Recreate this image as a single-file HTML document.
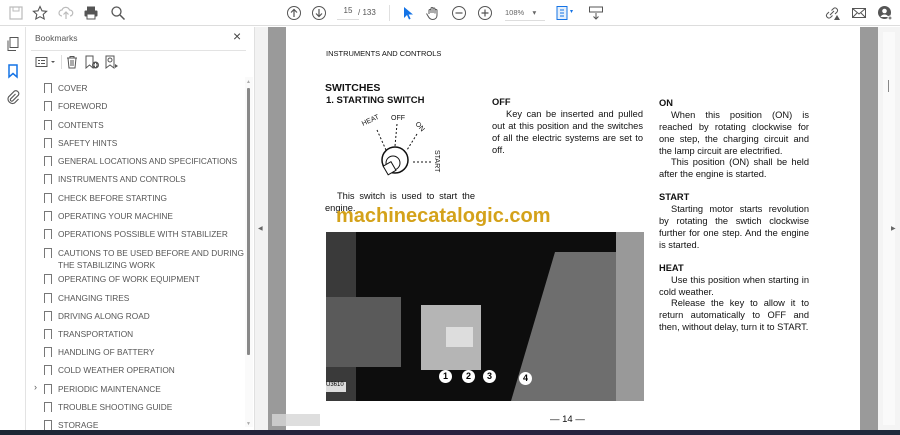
<!DOCTYPE html>
<html><head><style>
*{margin:0;padding:0;box-sizing:border-box}
body{width:900px;height:435px;overflow:hidden;background:#fff;font-family:"Liberation Sans",sans-serif;position:relative}
.a{position:absolute}
.tb{left:0;top:0;width:900px;height:26px;background:#fff;border-bottom:1px solid #ddd}
.ic{position:absolute;top:5px}
.rail{left:0;top:27px;width:26px;height:403px;background:#fff;border-right:1px solid #e3e3e3}
.panel{left:26px;top:27px;width:228px;height:403px;background:#fff}
.bm{position:absolute;left:44px;font-size:8.3px;color:#555;line-height:12px;white-space:nowrap}
.bm:before{content:"";position:absolute;left:0;top:1px;width:6px;height:9px;border:1px solid #777;border-bottom:none}
.bm span{position:absolute;left:14px;top:0}
.pg{font-family:"Liberation Sans",sans-serif;color:#111;position:absolute;font-size:9.3px;line-height:12px}
.j{text-align:justify}
</style></head><body>
<div class="a tb">
 <svg class="ic" style="left:8px" width="16" height="16" viewBox="0 0 16 16"><rect x="2" y="2" width="12" height="12" fill="none" stroke="#bbb" stroke-width="1.2"/><rect x="5" y="2" width="6" height="4" fill="none" stroke="#bbb"/></svg>
 <svg class="ic" style="left:32px" width="16" height="16" viewBox="0 0 16 16"><path d="M8 1.5l2 4.3 4.6.5-3.4 3.1 1 4.6L8 11.7 3.8 14l1-4.6L1.4 6.3l4.6-.5z" fill="none" stroke="#555" stroke-width="1.1"/></svg>
 <svg class="ic" style="left:58px" width="16" height="16" viewBox="0 0 16 16"><path d="M4 11a3 3 0 010-6 4 4 0 017.5 0A3 3 0 0112 11M8 14V7M5.5 9.5L8 7l2.5 2.5" fill="none" stroke="#bbb" stroke-width="1.2"/></svg>
 <svg class="ic" style="left:83px" width="16" height="16" viewBox="0 0 16 16"><rect x="4" y="1.5" width="8" height="4" fill="#555"/><rect x="1.5" y="5.5" width="13" height="6" rx="1" fill="#555"/><rect x="4" y="9" width="8" height="5" fill="#fff" stroke="#555"/></svg>
 <svg class="ic" style="left:110px" width="16" height="16" viewBox="0 0 16 16"><circle cx="6.5" cy="6.5" r="4.5" fill="none" stroke="#555" stroke-width="1.3"/><path d="M10 10l4.5 4.5" stroke="#555" stroke-width="1.5"/></svg>
 <svg class="ic" style="left:286px" width="16" height="16" viewBox="0 0 16 16"><circle cx="8" cy="8" r="6.5" fill="none" stroke="#555"/><path d="M8 12V4.5M5 7.5L8 4.5l3 3" fill="none" stroke="#555" stroke-width="1.2"/></svg>
 <svg class="ic" style="left:311px" width="16" height="16" viewBox="0 0 16 16"><circle cx="8" cy="8" r="6.5" fill="none" stroke="#555"/><path d="M8 4v7.5M5 8.5l3 3 3-3" fill="none" stroke="#555" stroke-width="1.2"/></svg>
 <div class="a" style="left:337px;top:6px;width:22px;height:14px;border-bottom:1px solid #ddd;font-size:8px;color:#555;text-align:center">15</div>
 <div class="a" style="left:358px;top:8px;font-size:8px;color:#555">/ 133</div>
 <div class="a" style="left:389px;top:5px;width:1px;height:16px;background:#e0e0e0"></div>
 <svg class="ic" style="left:400px" width="16" height="16" viewBox="0 0 16 16"><path d="M4 2v11l3-3 2 4.5 1.6-.7-2-4.3H13z" fill="#1473e6"/></svg>
 <svg class="ic" style="left:425px" width="16" height="16" viewBox="0 0 16 16"><path d="M4 9V5.5a1 1 0 012 0V8 3.5a1 1 0 012 0V8 4a1 1 0 012 0v4.5-3a1 1 0 012 0V10c0 3-2 4.5-4.5 4.5S4 13 3 11l-1.5-2.5" fill="none" stroke="#555" stroke-width="1"/></svg>
 <svg class="ic" style="left:451px" width="16" height="16" viewBox="0 0 16 16"><circle cx="8" cy="8" r="6.5" fill="none" stroke="#555"/><path d="M4.5 8h7" stroke="#555" stroke-width="1.2"/></svg>
 <svg class="ic" style="left:477px" width="16" height="16" viewBox="0 0 16 16"><circle cx="8" cy="8" r="6.5" fill="none" stroke="#555"/><path d="M4.5 8h7M8 4.5v7" stroke="#555" stroke-width="1.2"/></svg>
 <div class="a" style="left:505px;top:8px;width:40px;font-size:7.5px;color:#666;border-bottom:1px solid #ddd;height:13px">108%&nbsp;&nbsp;&nbsp;&nbsp;▾</div>
 <svg class="ic" style="left:555px" width="16" height="16" viewBox="0 0 16 16"><rect x="2" y="1.5" width="10" height="13" fill="#e6f0fb" stroke="#1473e6"/><path d="M5 5h4M5 8h4M5 11h4" stroke="#1473e6"/></svg>
 <div class="a" style="left:570px;top:8px;font-size:6px;color:#1473e6">▾</div>
 <svg class="ic" style="left:588px" width="16" height="16" viewBox="0 0 16 16"><rect x="1.5" y="2" width="13" height="5" fill="none" stroke="#555"/><path d="M8 8v6M5.5 11.5L8 14l2.5-2.5" fill="none" stroke="#555"/></svg>
 <svg class="ic" style="left:824px" width="16" height="16" viewBox="0 0 16 16"><path d="M6 10L10 6M5 7l-2 2a2.5 2.5 0 003.5 3.5l2-2M11 9l2-2a2.5 2.5 0 00-3.5-3.5l-2 2" fill="none" stroke="#555"/><path d="M10 15l3-5 3 5z" fill="#555"/></svg>
 <svg class="ic" style="left:851px" width="16" height="16" viewBox="0 0 16 16"><rect x="1.5" y="3.5" width="13" height="9" fill="none" stroke="#555"/><path d="M1.5 3.5L8 9l6.5-5.5M1.5 12.5L6 8M14.5 12.5L10 8" fill="none" stroke="#555"/></svg>
 <svg class="ic" style="left:877px" width="16" height="16" viewBox="0 0 16 16"><circle cx="7.5" cy="7.5" r="6.5" fill="#555"/><circle cx="7.5" cy="6" r="2.3" fill="#fff"/><path d="M3.5 12a4.5 4.5 0 018 0" fill="#fff"/><circle cx="13" cy="13" r="2.5" fill="#fff"/><path d="M13 11.5v3M11.5 13h3" stroke="#555"/></svg>
</div>
<div class="a rail">
 <svg class="a" style="left:5px;top:9px" width="16" height="16" viewBox="0 0 16 16"><rect x="5" y="1.5" width="8" height="10" fill="none" stroke="#555"/><path d="M3 4.5v10h8" fill="none" stroke="#555"/></svg>
 <svg class="a" style="left:5px;top:36px" width="16" height="16" viewBox="0 0 16 16"><path d="M4 2h8v12l-4-3.5L4 14z" fill="none" stroke="#1473e6" stroke-width="1.5"/></svg>
 <svg class="a" style="left:5px;top:62px" width="16" height="16" viewBox="0 0 16 16"><path d="M10.5 5l-5 5a1.5 1.5 0 002 2l6-6a3 3 0 00-4-4l-6 6a4.5 4.5 0 006 6l4-4" fill="none" stroke="#555" stroke-width="1.1"/></svg>
</div>
<div class="a panel">
 <div class="a" style="left:9px;top:6px;font-size:8.5px;color:#555">Bookmarks</div>
 <div class="a" style="left:207px;top:1px;font-size:14px;color:#444">×</div>
 <div class="a" style="left:5px;top:23px;width:215px;height:1px;background:#e3e3e3"></div>
 <svg class="a" style="left:9px;top:29px" width="22" height="12" viewBox="0 0 22 12"><rect x="1" y="1.5" width="11" height="9" fill="none" stroke="#555"/><path d="M3 4.5h2M6 4.5h4M3 7.5h2M6 7.5h4" stroke="#555"/><path d="M16 5l2 2 2-2z" fill="#555"/></svg>
 <div class="a" style="left:35px;top:28px;width:1px;height:14px;background:#ddd"></div>
 <svg class="a" style="left:39px;top:28px" width="14" height="14" viewBox="0 0 14 14"><path d="M2 3h10M5 3V1.5h4V3M3 3l1 10h6l1-10M6 5v6M8 5v6" fill="none" stroke="#555"/></svg>
 <svg class="a" style="left:58px;top:28px" width="16" height="14" viewBox="0 0 16 14"><path d="M2 1h7v12l-3.5-3L2 13z" fill="none" stroke="#555"/><circle cx="11.5" cy="10" r="3.5" fill="#555"/><path d="M11.5 8v4M9.5 10h4" stroke="#fff"/></svg>
 <svg class="a" style="left:78px;top:28px" width="16" height="14" viewBox="0 0 16 14"><path d="M2 1h8v12l-4-3-4 3z" fill="none" stroke="#555"/><circle cx="6" cy="5" r="2" fill="none" stroke="#555"/><path d="M11 9l3 2-3 2z" fill="#555"/></svg>
 <div class="a" style="left:219px;top:50px;width:8px;height:350px;background:#fafafa"></div>
 <div class="a" style="left:221px;top:61px;width:3px;height:267px;background:#888;border-radius:1px"></div>
 <div class="a" style="left:220px;top:52px;font-size:5px;color:#aaa">▲</div>
 <div class="a" style="left:220px;top:394px;font-size:5px;color:#aaa">▼</div>
</div>
<div class="bm" style="top:82px"><span>COVER</span></div>
<div class="bm" style="top:100px"><span>FOREWORD</span></div>
<div class="bm" style="top:119px"><span>CONTENTS</span></div>
<div class="bm" style="top:137px"><span>SAFETY HINTS</span></div>
<div class="bm" style="top:155px"><span>GENERAL LOCATIONS AND SPECIFICATIONS</span></div>
<div class="bm" style="top:173px"><span>INSTRUMENTS AND CONTROLS</span></div>
<div class="bm" style="top:192px"><span>CHECK BEFORE STARTING</span></div>
<div class="bm" style="top:210px"><span>OPERATING YOUR MACHINE</span></div>
<div class="bm" style="top:228px"><span>OPERATIONS POSSIBLE WITH STABILIZER</span></div>
<div class="bm" style="top:247px"><span>CAUTIONS TO BE USED BEFORE AND DURING<br>THE STABILIZING WORK</span></div>
<div class="bm" style="top:273px"><span>OPERATING OF WORK EQUIPMENT</span></div>
<div class="bm" style="top:292px"><span>CHANGING TIRES</span></div>
<div class="bm" style="top:310px"><span>DRIVING ALONG ROAD</span></div>
<div class="bm" style="top:328px"><span>TRANSPORTATION</span></div>
<div class="bm" style="top:346px"><span>HANDLING OF BATTERY</span></div>
<div class="bm" style="top:364px"><span>COLD WEATHER OPERATION</span></div>
<div class="bm" style="top:383px"><span>PERIODIC MAINTENANCE</span></div>
<div class="a" style="left:34px;top:382px;font-size:9px;color:#555">›</div>
<div class="bm" style="top:401px"><span>TROUBLE SHOOTING GUIDE</span></div>
<div class="bm" style="top:419px"><span>STORAGE</span></div>
<div class="a" style="left:254px;top:27px;width:14px;height:403px;background:#f2f2f2;border-left:1px solid #e0e0e0"></div>
<div class="a" style="left:258px;top:225px;font-size:6px;color:#666">◀</div>
<div class="a" style="left:268px;top:27px;width:18px;height:403px;background:#9a9a9a"></div>
<div class="a" style="left:860px;top:27px;width:18px;height:403px;background:#9a9a9a"></div>
<div class="a" style="left:878px;top:27px;width:22px;height:403px;background:#f4f4f4"></div>
<div class="a" style="left:883px;top:32px;width:12px;height:393px;background:#fafafa"></div>
<div class="a" style="left:888px;top:80px;width:1px;height:12px;background:#888"></div>
<div class="a" style="left:891px;top:225px;font-size:6px;color:#666">▶</div>
<div class="a" style="left:286px;top:27px;width:574px;height:403px;background:#fff"></div>
<div class="a" style="left:272px;top:414px;width:48px;height:12px;background:#d6d6d6;opacity:.8"></div>
<div class="a" style="left:0;top:430px;width:900px;height:5px;background:linear-gradient(90deg,#1c2634,#2a2240,#1f2a3c)"></div>

<div class="pg" style="left:326px;top:48px;font-size:7.5px">INSTRUMENTS AND CONTROLS</div>
<div class="pg" style="left:325px;top:82px;font-size:10.5px;font-weight:bold">SWITCHES</div>
<div class="pg" style="left:326px;top:95px;font-size:9.5px;font-weight:bold">1. STARTING SWITCH</div>
<svg class="a" style="left:355px;top:108px" width="100" height="72" viewBox="0 0 100 72">
 <text x="8" y="18" font-size="7" font-family="Liberation Sans" transform="rotate(-25 8 18)" fill="#111">HEAT</text>
 <text x="36" y="12" font-size="7" font-family="Liberation Sans" fill="#111">OFF</text>
 <text x="60" y="16" font-size="7" font-family="Liberation Sans" transform="rotate(50 60 16)" fill="#111">ON</text>
 <text x="80" y="42" font-size="7" font-family="Liberation Sans" transform="rotate(90 80 42)" fill="#111">START</text>
 <path d="M22 22L31 42M42 16L40 38M62 26L52 42M58 54H78" stroke="#111" stroke-dasharray="2 2"/>
 <circle cx="40" cy="52" r="13" fill="#fff" stroke="#111" stroke-width="1.5"/>
 <circle cx="38" cy="55" r="7" fill="none" stroke="#111"/>
 <rect x="30" y="55" width="9" height="10" fill="#fff" stroke="#111" transform="rotate(-30 35 60)"/>
</svg>
<div class="pg j" style="left:325px;top:190px;width:150px;text-indent:12px">This switch is used to start the engine.</div>
<div class="a" style="left:336px;top:205px;font-size:20px;font-weight:bold;color:#d4a21a;font-family:'Liberation Sans',sans-serif">machinecatalogic.com</div>
<div class="a" style="left:326px;top:232px;width:318px;height:169px;background:#0d0d0d;overflow:hidden">
 <div class="a" style="left:0;top:0;width:30px;height:169px;background:#3a3a3a"></div>
 <div class="a" style="left:0;top:65px;width:75px;height:70px;background:#5a5a5a"></div>
 <div class="a" style="left:95px;top:73px;width:60px;height:65px;background:#b5b5b5"></div>
 <div class="a" style="left:120px;top:95px;width:27px;height:20px;background:#ddd"></div>
 <div class="a" style="left:185px;top:20px;width:110px;height:149px;background:#6e6e6e;clip-path:polygon(40% 0,100% 0,100% 100%,0 100%)"></div>
 <div class="a" style="left:290px;top:0;width:28px;height:169px;background:#999"></div>
 <div class="a" style="left:0;top:150px;width:20px;height:10px;background:#ddd;font-size:6px;color:#000">U3610</div>
 <div class="a" style="left:113px;top:138px;width:13px;height:13px;border-radius:50%;background:#fff;color:#000;font-size:9px;font-weight:bold;text-align:center;line-height:13px">1</div>
 <div class="a" style="left:136px;top:138px;width:13px;height:13px;border-radius:50%;background:#fff;color:#000;font-size:9px;font-weight:bold;text-align:center;line-height:13px">2</div>
 <div class="a" style="left:157px;top:138px;width:13px;height:13px;border-radius:50%;background:#fff;color:#000;font-size:9px;font-weight:bold;text-align:center;line-height:13px">3</div>
 <div class="a" style="left:193px;top:140px;width:13px;height:13px;border-radius:50%;background:#fff;color:#000;font-size:9px;font-weight:bold;text-align:center;line-height:13px">4</div>
</div>
<div class="pg" style="left:550px;top:414px;font-size:9.5px">— 14 —</div>

<div class="pg" style="left:492px;top:96px;font-weight:bold">OFF</div>
<div class="pg j" style="left:492px;top:108px;width:151px;text-indent:14px">Key can be inserted and pulled out at this position and the switches of all the electric systems are set to off.</div>

<div class="pg" style="left:659px;top:97px;font-weight:bold">ON</div>
<div class="pg j" style="left:659px;top:109px;width:150px;text-indent:12px">When this position (ON) is reached by rotating clockwise for one step, the charging circuit and the lamp circuit are electrified.</div>
<div class="pg j" style="left:659px;top:156px;width:150px;text-indent:12px">This position (ON) shall be held after the engine is started.</div>
<div class="pg" style="left:659px;top:191px;font-weight:bold">START</div>
<div class="pg j" style="left:659px;top:203px;width:150px;text-indent:12px">Starting motor starts revolution by rotating the swtich clockwise further for one step. And the engine is started.</div>
<div class="pg" style="left:659px;top:262px;font-weight:bold">HEAT</div>
<div class="pg j" style="left:659px;top:274px;width:150px;text-indent:12px">Use this position when starting in cold weather.</div>
<div class="pg j" style="left:659px;top:297px;width:150px;text-indent:12px">Release the key to allow it to return automatically to OFF and then, without delay, turn it to START.</div>
</body></html>
